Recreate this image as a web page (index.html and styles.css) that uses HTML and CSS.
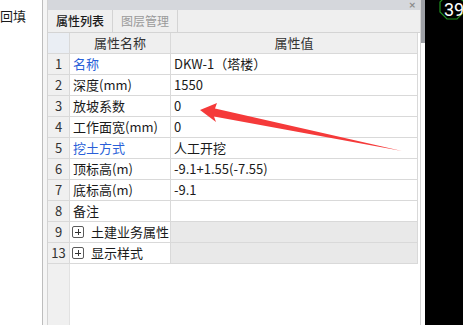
FILE: index.html
```html
<!DOCTYPE html>
<html>
<head>
<meta charset="utf-8">
<title>属性列表</title>
<link rel="stylesheet" href="styles.css">
</head>
<body>
<div class="left-panel">回填</div>
<div class="gap"></div>

<div class="prop-panel">
  <div class="title-bar"><span class="close">&times;</span></div>
  <div class="tabs">
    <div class="tab active">属性列表</div>
    <div class="tab">图层管理</div>
  </div>

  <div class="row head">
    <div class="num"></div>
    <div class="name">属性名称</div>
    <div class="value">属性值</div>
  </div>
  <div class="row">
    <div class="num">1</div>
    <div class="name link">名称</div>
    <div class="value">DKW-1（塔楼）</div>
  </div>
  <div class="row">
    <div class="num">2</div>
    <div class="name">深度(mm)</div>
    <div class="value">1550</div>
  </div>
  <div class="row">
    <div class="num">3</div>
    <div class="name">放坡系数</div>
    <div class="value">0</div>
  </div>
  <div class="row">
    <div class="num">4</div>
    <div class="name">工作面宽(mm)</div>
    <div class="value">0</div>
  </div>
  <div class="row">
    <div class="num">5</div>
    <div class="name link">挖土方式</div>
    <div class="value">人工开挖</div>
  </div>
  <div class="row">
    <div class="num">6</div>
    <div class="name">顶标高(m)</div>
    <div class="value">-9.1+1.55(-7.55)</div>
  </div>
  <div class="row">
    <div class="num">7</div>
    <div class="name">底标高(m)</div>
    <div class="value">-9.1</div>
  </div>
  <div class="row">
    <div class="num">8</div>
    <div class="name">备注</div>
    <div class="value"></div>
  </div>
  <div class="row group">
    <div class="num">9</div>
    <div class="name"><span class="expand"></span>土建业务属性</div>
    <div class="value"></div>
  </div>
  <div class="row group">
    <div class="num">13</div>
    <div class="name"><span class="expand"></span>显示样式</div>
    <div class="value"></div>
  </div>

  <div class="filler"><div class="num-fill"></div></div>
</div>

<div class="scroll"><div class="thumb"></div></div>

<div class="canvas">
  <svg class="badge" width="38" height="30" viewBox="0 0 38 30">
    <polygon points="22,-5 32,-5 39,2 39,12 32,19 22,19 15,12 15,2" fill="none" stroke="#1f8f1f" stroke-width="1.2"/>
    <text x="19" y="16" fill="#ffffff" font-family="Roboto, sans-serif" font-size="18">39</text>
  </svg>
</div>

<!-- red annotation arrow -->
<svg class="arrow" width="463" height="325" viewBox="0 0 463 325">
  <polygon points="200,110 217,103 215,108.5 402,151 214,116.5 216,122" fill="#f53a3a"/>
</svg>
</body>
</html>
```

FILE: styles.css
```css
body {
  margin: 0;
  width: 463px;
  height: 325px;
  display: flex;
  position: relative;
  overflow: hidden;
  font-family: "Noto Sans CJK SC", "Noto Sans", sans-serif;
  font-size: 13px;
  color: #1a1a1a;
  background: #ffffff;
}

.left-panel {
  width: 42px;
  border-right: 1px solid #bdbdbd;
  padding-top: 8px;
  line-height: 16px;
}

.gap {
  width: 4px;
  background: #f5f5f5;
}

.prop-panel {
  width: 372px;
  border-left: 1px solid #d3d3d3;
  border-right: 1px solid #d3d3d3;
  display: flex;
  flex-direction: column;
}

.title-bar {
  height: 10px;
  background: #d5d7dc;
  display: flex;
  justify-content: flex-end;
  align-items: center;
  padding-right: 4px;
}

.close {
  font-family: "DejaVu Sans", sans-serif;
  font-size: 9px;
  line-height: 9px;
  color: #8a8a8a;
  font-weight: bold;
}

.tabs {
  height: 22px;
  background: #efefef;
  border-bottom: 1px solid #d4d4d4;
  display: flex;
}

.tab {
  width: 64px;
  border-right: 1px solid #d4d4d4;
  text-align: center;
  font-size: 12px;
  line-height: 22px;
  color: #9a9a9a;
}

.tab.active {
  color: #1a1a1a;
  font-weight: 500;
}

.row {
  display: grid;
  grid-template-columns: 22px 101px 247px;
  height: 21px;
}

.row > div {
  border-right: 1px solid #d9d9d9;
  border-bottom: 1px solid #d9d9d9;
  line-height: 20px;
  white-space: nowrap;
  overflow: hidden;
}

.num {
  background: #f0f0f0;
  text-align: center;
  color: #333333;
}

.name {
  padding-left: 3px;
}

.value {
  padding-left: 3px;
}

.head > div {
  background: #efefef;
  text-align: center;
  color: #333333;
  padding-left: 0;
}

.head .num {
  background: #eaeef4;
}

.link {
  color: #2a5fd8;
}

.group .name {
  padding-left: 2px;
  display: flex;
  align-items: center;
}

.group .value {
  background: #e9e9e9;
}

.expand {
  width: 10px;
  height: 10px;
  border: 1px solid #5a5a5a;
  border-radius: 2px;
  margin-right: 7px;
  position: relative;
}

.expand::before,
.expand::after {
  content: "";
  position: absolute;
  background: #333333;
}

.expand::before {
  left: 2px;
  top: 4.5px;
  width: 6px;
  height: 1px;
}

.expand::after {
  left: 4.5px;
  top: 2px;
  width: 1px;
  height: 6px;
}

.filler {
  flex: 1;
  display: flex;
}

.num-fill {
  width: 21px;
  background: #f0f0f0;
  border-right: 1px solid #e2e2e2;
}

.scroll {
  width: 4px;
  background: #ffffff;
}

.thumb {
  height: 43px;
  background: #9da0a5;
}

.canvas {
  width: 38px;
  background: #000000;
}

.badge {
  display: block;
}

.arrow {
  position: absolute;
  left: 0;
  top: 0;
  pointer-events: none;
}
```
